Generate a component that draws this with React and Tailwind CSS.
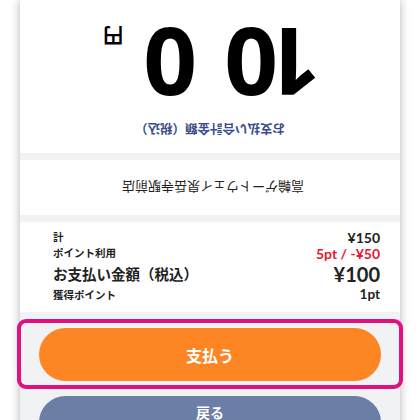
export default function App() {
  const jp = { fontFamily: '"Noto Sans CJK JP", "Noto Sans", sans-serif' };
  const num = { fontFamily: 'Lato, "Noto Sans CJK JP", sans-serif' };
  const big = { fontFamily: '"Noto Sans", sans-serif' };

  return (
    <div className="h-[420px] w-[420px] overflow-hidden bg-white" style={jp}>
      <div className="mx-[20px] flex h-[470px] flex-col bg-[#f1f2f4] shadow-[0_0_9px_rgba(0,0,0,0.3)]">
        {/* total, shown upside down to the customer */}
        <div className="flex h-[153px] rotate-180 flex-col items-center bg-white pt-[14px]">
          <div className="text-[12.5px] font-bold leading-[20px] text-[#3a4d8c]">
            お支払い合計金額（税込）
          </div>
          <div
            className="mt-[15px] mr-[4px] flex items-baseline text-[94px] font-bold leading-[80px] text-black"
            style={big}
          >
            <span className="tracking-[-11px]">1</span>
            <span className="tracking-[27px]">0</span>
            <span>0</span>
            <span className="ml-[20px] text-[20px] leading-none" style={jp}>円</span>
          </div>
        </div>

        <div className="h-[7px] bg-[#f2f2f2]" />

        {/* store */}
        <div className="flex h-[55px] rotate-180 items-center justify-center bg-white">
          <span className="mr-[6px] text-[13px] text-[#222]">高輪ゲートウェイ泉岳寺駅前店</span>
        </div>

        <div className="h-[7px] bg-[#f2f2f2]" />

        {/* breakdown */}
        <div className="flex h-[90px] flex-col bg-white pt-[7px] pr-[20px] pl-[33px] text-[#222]">
          <div className="flex h-[16px] items-center justify-between">
            <span className="text-[10.5px] font-bold">計</span>
            <span className="text-[14px] font-bold" style={num}>¥150</span>
          </div>
          <div className="flex h-[16px] items-center justify-between">
            <span className="text-[10.5px] font-bold">ポイント利用</span>
            <span className="text-[14px] font-bold text-[#e8172f]" style={num}>5pt / -¥50</span>
          </div>
          <div className="flex h-[25px] items-center justify-between">
            <span className="text-[14.5px] font-bold">お支払い金額（税込）</span>
            <span className="text-[20px] font-bold" style={num}>¥100</span>
          </div>
          <div className="flex h-[17px] items-center justify-between">
            <span className="text-[10.5px] font-bold">獲得ポイント</span>
            <span className="text-[13.5px] font-bold" style={num}>1pt</span>
          </div>
        </div>

        {/* actions */}
        <div className="flex flex-col pt-[7px]">
          <div className="mx-[-3px] rounded-[9px] border-4 border-[#e0117f] px-[18px] pt-[5px] pb-[4px]">
            <button className="flex h-[53px] w-full items-center justify-center rounded-full bg-[#fd8524] text-[16px] font-bold text-white">
              支払う
            </button>
          </div>
          <div className="px-[19px] pt-[7px]">
            <button className="flex h-[53px] w-full items-start justify-center rounded-full bg-[#6b7ea6] pt-[6px] text-[14px] font-bold text-white">
              戻る
            </button>
          </div>
        </div>
      </div>
    </div>
  );
}
